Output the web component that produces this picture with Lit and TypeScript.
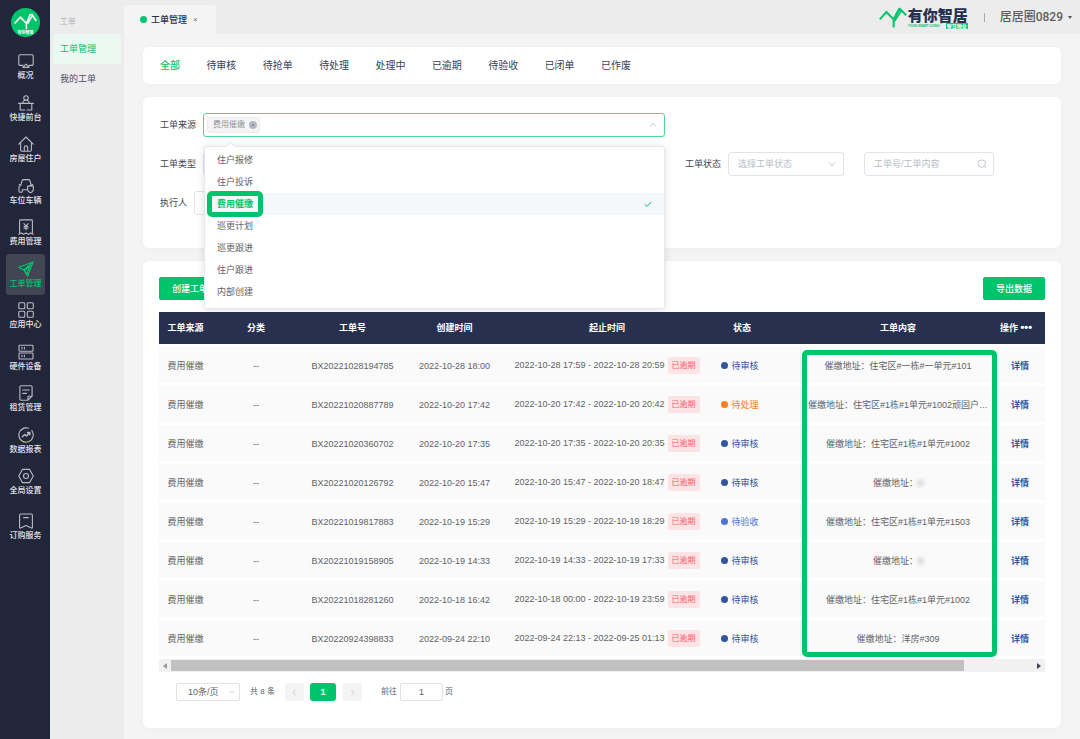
import { LitElement, html, svg, css } from "lit";
import { customElement, property, state } from "lit/decorators.js";
import { classMap } from "lit/directives/class-map.js";

const GLYPHS: Record<string, unknown> = {
  overview: svg`<path d="M11 12.400h3a1.200 1.200 0 0 0 1.200-1.200V3A1.200 1.200 0 0 0 14 1.800H2A1.200 1.200 0 0 0 .8 3v8.200A1.200 1.200 0 0 0 2 12.400h3M4.800 14.400 8 11.200l3.200 3.200z"/>`,
  desk: svg`<circle cx="8" cy="3" r="2.200"/><path d="M4.800 8.200c0-2 1.300-3 3.200-3s3.200 1 3.200 3M.6 8.400h14.800M2.200 8.400v6.600h4.400M13.800 8.400v6.600H9"/>`,
  house: svg`<path d="M.8 8.200 8 1l7.200 7.200M2.600 6.800v7.200c0 .8.4 1.200 1.200 1.200h8.400c.8 0 1.200-.4 1.200-1.200V6.800M6.300 15v-3.400a1.700 1.700 0 0 1 3.400 0V15"/>`,
  car: svg`<path d="M8.600 11.800H4.400v1.400c0 .7-.4 1-1 1H2c-.7 0-1-.4-1-1V8.800l1.800-1.600 1.300-4.600c.2-.7.6-1 1.300-1h5.200c.7 0 1.100.3 1.300 1L13.200 7M1.200 6.600l1.600.6M14.800 6.600l-1.200.6M9.600 8.400l2.900-.8 2.900.8v2.800c0 1.700-1.200 2.800-2.900 3.600-1.700-.8-2.900-1.900-2.900-3.600z"/>`,
  fee: svg`<path d="M1.600 13.800V1.800c0-.6.3-.9.9-.9h11c.6 0 .9.3.9.9v12M.8 15.200l2.400-1.300 2.400 1.300L8 13.900l2.400 1.300 2.400-1.300 2.400 1.300M5.900 4.600 8 7.200l2.100-2.600M8 7.200v3.600M6 7.600h4M6 9.200h4"/>`,
  order: svg`<path d="M15.200.9.800 6.200l5 2.700L9.600 15.200z"/><path d="M15.200.9 5.800 8.900M12.600 3.600 9.200 12.400M11.600 4.400l-4.800 5.200 2.200 3.600z"/>`,
  apps: svg`<rect x=".8" y=".8" width="6" height="6" rx="1"/><rect x="9.300" y=".8" width="6" height="6" rx="1"/><rect x=".8" y="9.300" width="6" height="6" rx="1"/><rect x="9.300" y="9.300" width="6" height="6" rx="1"/>`,
  device: svg`<rect x="1" y="1.200" width="14" height="6" rx=".8"/><rect x="1" y="9" width="14" height="6" rx=".8"/><path d="M4 3.400v1.600M6.400 3.400v1.600M4 11.200v1.600M6.400 11.200v1.600"/>`,
  lease: svg`<path d="M10 15.200H3c-.7 0-1.100-.4-1.100-1.100V1.900c0-.7.4-1.100 1.100-1.100h10c.7 0 1.100.4 1.100 1.100v9.300L10 15.200V12c0-.5.3-.8.8-.8h3.300M4.800 5h6.400M4.800 8.400h3.600"/>`,
  report: svg`<path d="M10.400 1.200a7.200 7.200 0 1 0 3.400 2.500M3.200 3.200A7.200 7.200 0 0 1 8 .8"/><path stroke-width="1.500" d="m4.400 9.800 2.300-2.300 1.800 1.500 3-3.200M9.400 5.400h2.400v2.300"/>`,
  gear: svg`<path d="M4.400 1.400h7.200L15.300 8l-3.700 6.600H4.400L.7 8z"/><circle cx="8" cy="8" r="2.500"/>`,
  cart: svg`<path d="M1.600 14.400V2.200c0-.8.4-1.200 1.200-1.200h10.400c.8 0 1.200.4 1.200 1.200v12.200c0 .7-.4.900-1 .5L8 12.400l-5.400 2.500c-.6.4-1 .2-1-.5zM5.600 4.600h4.800"/>`,
};

@customElement("line-icon")
class LineIcon extends LitElement {
  static styles = css`
    :host { display: block; width: 16px; height: 16px; }
    svg { display: block; width: 100%; height: 100%; fill: none; stroke: currentColor; stroke-width: 1.1; stroke-linejoin: round; stroke-linecap: round; }
  `;
  @property() name = "overview";
  render() {
    return html`<svg viewBox="0 0 16 16" aria-hidden="true">${GLYPHS[this.name]}</svg>`;
  }
}

const NAV: [string, string][] = [
  ["overview", "概况"], ["desk", "快捷前台"], ["house", "房屋住户"], ["car", "车位车辆"],
  ["fee", "费用管理"], ["order", "工单管理"], ["apps", "应用中心"], ["device", "硬件设备"],
  ["lease", "租赁管理"], ["report", "数据报表"], ["gear", "全局设置"],
];

@customElement("side-nav")
class SideNav extends LitElement {
  static styles = css`
    :host { display: flex; flex-direction: column; width: 50px; flex: none; background: #22263a; color: #e3e4e8; }
    .brand { display: block; width: 29px; height: 29px; margin: 8px auto 9px 11px; }
    .list { display: flex; flex-direction: column; height: 457px; }
    .item { flex: 1; display: flex; flex-direction: column; align-items: center; margin: 0 5px 0 6px; padding-top: 7px; box-sizing: border-box; border-radius: 3px; color: inherit; text-decoration: none; font-size: 8px; line-height: 12px; font-weight: 500; white-space: nowrap; }
    .item line-icon { color: #b9bbc3; margin-bottom: 1px; }
    .active { background: #414554; color: #00c46c; }
    .active line-icon { color: #00c46c; }
    .last { flex: none; margin-top: 3px; }
  `;
  render() {
    const item = (icon: string, label: string, cls: object) => html`
      <a class=${classMap({ item: true, ...cls })} href="#"><line-icon name=${icon}></line-icon>${label}</a>`;
    return html`
      <svg class="brand" viewBox="0 0 29 29" role="img" aria-label="有你智居">
        <circle cx="14.500" cy="14.500" r="14.500" fill="#00c46c"/>
        <path d="M3.600 15.600 9.400 9.200l6 6.200v5.600M15.400 15.200 19.400 6M16.600 15.600 21.800 6.600M20.600 6l4.600 7" fill="none" stroke="#fff" stroke-width="1.500"/>
        <text x="14.500" y="26" text-anchor="middle" font-size="4" font-weight="700" fill="#fff">有你智居</text>
      </svg>
      <nav class="list">${NAV.map(([i, l]) => item(i, l, { active: l === "工单管理" }))}</nav>
      ${item("cart", "订购服务", { last: true })}
    `;
  }
}

const FILTERS = ["全部", "待审核", "待抢单", "待处理", "处理中", "已逾期", "待验收", "已闭单", "已作废"];
const SOURCES = ["住户报修", "住户投诉", "费用催缴", "巡更计划", "巡更跟进", "住户跟进", "内部创建"];

interface Order { id: string; created: string; from: string; to: string; status: string; address: string; masked?: boolean }
const ORDERS: Order[] = [
  { id: "BX20221028194785", created: "2022-10-28 18:00", from: "2022-10-28 17:59", to: "2022-10-28 20:59", status: "待审核", address: "住宅区#一栋#一单元#101" },
  { id: "BX20221020887789", created: "2022-10-20 17:42", from: "2022-10-20 17:42", to: "2022-10-20 20:42", status: "待处理", address: "住宅区#1栋#1单元#1002顽固户…" },
  { id: "BX20221020360702", created: "2022-10-20 17:35", from: "2022-10-20 17:35", to: "2022-10-20 20:35", status: "待审核", address: "住宅区#1栋#1单元#1002" },
  { id: "BX20221020126792", created: "2022-10-20 15:47", from: "2022-10-20 15:47", to: "2022-10-20 18:47", status: "待审核", address: "", masked: true },
  { id: "BX20221019817883", created: "2022-10-19 15:29", from: "2022-10-19 15:29", to: "2022-10-19 18:29", status: "待验收", address: "住宅区#1栋#1单元#1503" },
  { id: "BX20221019158905", created: "2022-10-19 14:33", from: "2022-10-19 14:33", to: "2022-10-19 17:33", status: "待审核", address: "", masked: true },
  { id: "BX20221018281260", created: "2022-10-18 16:42", from: "2022-10-18 00:00", to: "2022-10-19 23:59", status: "待审核", address: "住宅区#1栋#1单元#1002" },
  { id: "BX20220924398833", created: "2022-09-24 22:10", from: "2022-09-24 22:13", to: "2022-09-25 01:13", status: "待审核", address: "洋房#309" },
];

const chevron = (d: string, cls = "") => html`<svg class="chev ${cls}" viewBox="0 0 8 8" aria-hidden="true"><path d=${d}/></svg>`;
const DOWN = "M.8 2.400 4 5.800l3.200-3.400";
const UP = "M.8 5.600 4 2.200l3.200 3.400";

@customElement("app-root")
class AppRoot extends LitElement {
  static styles = css`
    :host { display: flex; min-height: 100vh; background: #f4f4f4; color: #606266; font: 9px/14px "Liberation Sans", "Noto Sans CJK SC", sans-serif; }
    * { box-sizing: border-box; }
    button, input, select { font: inherit; color: inherit; margin: 0; }
    button { border: 0; padding: 0; background: none; cursor: pointer; }
    a { text-decoration: none; color: inherit; }
    ul { list-style: none; margin: 0; padding: 0; }

    .submenu { width: 74px; flex: none; background: #ececec; padding: 14px 3px 0; color: #4a5164; }
    .submenu .title { font-size: 8px; line-height: 15px; color: #b4b4b4; padding-left: 7px; height: 20px; }
    .submenu a { display: block; height: 30px; line-height: 30px; padding-left: 7px; border-radius: 3px; }
    .submenu .on { background: #ebf9f2; color: #00c46c; }

    .main { flex: 1; min-width: 0; display: flex; flex-direction: column; }
    .topbar { height: 34px; background: #ececec; display: flex; justify-content: space-between; align-items: flex-end; }
    .tab { height: 29px; width: 92px; background: #f4f4f4; display: flex; align-items: center; padding-left: 16px; color: #2b3350; font-weight: 500; border-radius: 2px 2px 0 0; }
    .tab .dot { width: 7px; height: 7px; margin-right: 4px; background: #00c46c; border-radius: 50%; }
    .tab .close { margin-left: 6px; color: #666b78; font-size: 8px; line-height: 12px; }
    .account { display: flex; align-items: center; height: 34px; padding-right: 8px; }
    .logo { display: flex; }
    .logo svg { display: block; width: 28px; height: 21px; margin-top: 1px; }
    .wordmark { display: flex; flex-direction: column; margin-left: 1px; }
    .wordmark .name { font-size: 15px; line-height: 16px; font-weight: 900; font-style: oblique 8deg; color: #27314f; height: 17px; padding-top: 2px; }
    .wordmark .sub { display: flex; align-items: center; justify-content: space-between; height: 6px; font-size: 3px; line-height: 6px; color: #00c46c; font-weight: 700; }
    .wordmark .badge { background: #00c46c; color: #fff; font-size: 5px; padding: 0 1px; }
    .divider { width: 1px; height: 9px; background: #a8a8ac; margin: 0 15px 0 16px; }
    .user { display: flex; align-items: center; font-family: Roboto, "Noto Sans CJK SC", sans-serif; font-size: 12px; line-height: 16px; font-weight: 500; color: #5c5d63; }
    .caret { border: 2px solid transparent; border-top: 3px solid #55565c; border-bottom: 0; margin-left: 5px; }

    .content { display: flex; flex-direction: column; gap: 13px; padding: 13px 19px 11px; }
    .card { background: #fff; border-radius: 6px; box-shadow: 0 1px 5px rgba(0, 0, 0, 0.03); padding: 16px; }
    .filters { height: 37px; padding: 0 17px; display: flex; align-items: center; }
    .filters ul { width: 471px; display: flex; justify-content: space-between; }
    .filters button { font-size: 10px; line-height: 16px; color: #3b4256; display: block; }
    .filters .on { color: #00c46c; font-weight: 500; }

    .form { display: flex; flex-direction: column; gap: 15px; padding-left: 17px; padding-bottom: 33px; }
    .row { display: flex; gap: 20px; }
    .field { display: flex; align-items: center; gap: 7px; height: 24px; }
    .wide { width: 505px; }
    .field label { color: #44474f; white-space: nowrap; }
    .control { position: relative; display: flex; align-items: center; height: 24px; border: 1px solid #e1e4eb; border-radius: 3px; background: #fff; }
    .control select, .control input { appearance: none; width: 100%; height: 100%; border: 0; outline: 0; background: none; padding: 0 9px; color: #b9bdc6; border-radius: 3px; }
    .control input::placeholder { color: #b9bdc6; opacity: 1; }
    .w116 { width: 116px; }
    .w130 { width: 130px; }
    .chev { position: absolute; right: 7px; width: 8px; height: 8px; fill: none; stroke: #c0c4cc; stroke-width: 1; pointer-events: none; }
    .search { position: absolute; right: 6px; width: 10px; height: 10px; fill: none; stroke: #c0c4cc; }
    .multi { flex: 1; border-color: #4fd597; padding-left: 3px; }
    .multi input { flex: 1; width: 0; }
    .tag { display: flex; align-items: center; gap: 4px; height: 16px; padding: 0 2px 0 5px; background: #f4f4f5; border: 1px solid #ebebee; border-radius: 3px; color: #909399; font-size: 8px; white-space: nowrap; flex: none; }
    .tag svg { display: block; width: 8px; height: 8px; }

    .drop { position: absolute; z-index: 5; top: 32px; left: 0; right: -1px; height: 163px; background: #fff; border: 1px solid #e4e7ed; border-radius: 3px; box-shadow: 0 1px 8px rgba(0, 0, 0, 0.12); padding-top: 2px; }
    .drop::before { content: ""; position: absolute; left: 22px; top: -4px; width: 6px; height: 6px; background: #fff; border: 1px solid #e4e7ed; border-right: 0; border-bottom: 0; transform: rotate(45deg); }
    .option { position: relative; display: flex; align-items: center; justify-content: space-between; width: 100%; height: 22px; padding: 0 12px; color: #606266; }
    .option.on { background: #f5f7fa; color: #00c46c; font-weight: 700; }
    .option svg { width: 8px; height: 8px; fill: none; stroke: #00c46c; stroke-width: 1; }
    .mark { position: absolute; border: 5px solid #00c46c; border-radius: 5px; pointer-events: none; }
    .mark-option { left: 2px; top: -2px; width: 56px; height: 26px; }
    .mark-column { right: 48px; top: 41px; width: 195px; height: 307px; }

    .actions { display: flex; justify-content: space-between; margin-bottom: 9px; }
    .primary { height: 23px; width: 62px; background: #00c46c; color: #fff; border-radius: 2px; font-weight: 500; }
    .grid { position: relative; }
    table { width: 100%; table-layout: fixed; border-collapse: separate; border-spacing: 0 3px; text-align: center; }
    th { height: 32px; padding: 0; background: #27314f; color: #fff; font-weight: 700; }
    td { height: 36px; padding: 1px 0 0; background: #fafafa; white-space: nowrap; }
    .c1 { width: 53px; } .c2 { width: 88px; } .c3 { width: 105px; } .c4 { width: 99px; }
    .c5 { width: 206px; } .c6 { width: 64px; } .c8 { width: 194px; } .c9 { width: 50px; }
    .edge { border-right: 1px solid rgba(0, 0, 0, 0.04); }
    .ops { padding-right: 8px; }
    .more { font-size: 11px; line-height: 9px; }
    .span { display: flex; align-items: center; justify-content: center; gap: 3px; }
    .span time { padding-bottom: 2px; }
    .late { height: 17px; line-height: 17px; padding: 0 4px; background: #fce3e5; color: #f5606b; border-radius: 3px; font-size: 8px; }
    .status { display: flex; align-items: center; justify-content: center; gap: 3px; padding-right: 4px; color: #32559f; }
    .status::before { content: ""; width: 7px; height: 7px; border-radius: 50%; background: currentColor; }
    .pending { color: #fb7d1c; }
    .check { color: #4b76d8; }
    .masked { filter: blur(2px); color: #909399; }
    .detail { color: #32559f; font-weight: 700; }
    .scroll { display: grid; grid-template-columns: 12px 1fr 12px; align-items: center; height: 13px; background: #f1f1f1; }
    .scroll button { display: flex; align-items: center; justify-content: center; height: 13px; }
    .scroll svg { width: 4px; height: 6px; fill: #999; }
    .scroll .next svg { fill: #404354; }
    .thumb { width: 92%; height: 11px; background: #c1c1c1; }

    .pager { display: flex; align-items: center; height: 18px; margin: 11px 17px; font-size: 8px; color: #606266; white-space: nowrap; }
    .pager .control { height: 18px; border-radius: 2px; }
    .pager .size { width: 64px; margin-right: 10px; }
    .pager select { color: #606266; font-size: 9px; padding: 0 11px; }
    .pager .size .chev { right: 4px; width: 6px; height: 6px; }
    .pager .step { display: flex; align-items: center; justify-content: center; width: 19px; height: 18px; background: #f4f4f5; border-radius: 2px; }
    .step .chev { position: static; width: 7px; height: 7px; }
    .pager .current { width: 26px; height: 18px; margin: 0 7px 0 6px; border-radius: 3px; background: #00c46c; color: #fff; font-size: 9px; font-weight: 700; }
    .total { margin-right: 9px; width: 26px; font-size: 8px; }
    .pager .jump { width: 43px; margin: 0 2px 0 3px; }
    .pager .jump input { text-align: center; color: #606266; font-size: 9px; padding: 0; }
    .goto { margin-left: 19px; }
  `;

  @state() private filter = "全部";
  @state() private source = "费用催缴";

  private field(id: string, label: string, control: unknown, wide = false) {
    return html`<div class=${classMap({ field: true, wide })}><label for=${id}>${label}</label>${control}</div>`;
  }

  private picker(id: string, placeholder: string) {
    return html`<div class="control w116"><select id=${id}><option>${placeholder}</option></select>${chevron(DOWN)}</div>`;
  }

  private sourcePicker() {
    return html`
      <div class="control multi">
        <span class="tag">${this.source}
          <svg viewBox="0 0 8 8" aria-hidden="true"><circle cx="4" cy="4" r="4" fill="#b4bac4"/><path d="M2.600 2.600l2.800 2.800M5.400 2.600 2.600 5.400" stroke="#7d8596" stroke-width=".8"/></svg>
        </span>
        <input id="source" role="combobox" aria-expanded="true" aria-controls="sources" readonly />
        ${chevron(UP)}
        <div class="drop" id="sources" role="listbox">
          ${SOURCES.map((s) => html`
            <button class=${classMap({ option: true, on: s === this.source })} role="option" aria-selected=${s === this.source} @click=${() => (this.source = s)}>
              ${s}
              ${s === this.source ? html`<svg viewBox="0 0 8 8"><path d="M.6 4.200 3 6.400l4.400-4.600"/></svg><i class="mark mark-option"></i>` : ""}
            </button>`)}
        </div>
      </div>`;
  }

  private row(o: Order) {
    return html`
      <tr>
        <td>费用催缴</td><td>--</td><td>${o.id}</td><td>${o.created}</td>
        <td><div class="span"><time>${o.from} - ${o.to}</time><span class="late">已逾期</span></div></td>
        <td><span class=${classMap({ status: true, pending: o.status === "待处理", check: o.status === "待验收" })}>${o.status}</span></td>
        <td class="edge"></td>
        <td>催缴地址：${o.masked ? html`<span class="masked">9</span>` : o.address}</td>
        <td><a class="detail" href="#">详情</a></td>
      </tr>`;
  }

  render() {
    return html`
      <side-nav></side-nav>
      <nav class="submenu">
        <div class="title">工单</div>
        <a class="on" href="#">工单管理</a>
        <a href="#">我的工单</a>
      </nav>
      <div class="main">
        <header class="topbar">
          <div class="tab"><i class="dot"></i>工单管理<button class="close" aria-label="关闭">×</button></div>
          <div class="account">
            <div class="logo">
              <svg viewBox="0 0 28 21" aria-hidden="true">
                <path d="M.8 12.400 7.400 5l7.200 7.400v8.200M14.400 12.600 20.200 2M15.400 14 22.600 3.200M20.400 1.400l6.800 6.800" fill="none" stroke="#00c46c" stroke-width="2"/>
                <path d="M16 7.600 20.400.6l1.600 1-4.600 7z" fill="#00c46c"/>
              </svg>
              <div class="wordmark">
                <span class="name">有你智居</span>
                <span class="sub"><span>YOUNI SMART LIVING</span><span class="badge">智慧物业</span></span>
              </div>
            </div>
            <i class="divider"></i>
            <button class="user">居居圈0829<i class="caret"></i></button>
          </div>
        </header>
        <main class="content">
          <section class="card filters">
            <ul>${FILTERS.map((f) => html`<li><button class=${classMap({ on: f === this.filter })} @click=${() => (this.filter = f)}>${f}</button></li>`)}</ul>
          </section>
          <section class="card form">
            <div class="row">${this.field("source", "工单来源", this.sourcePicker(), true)}</div>
            <div class="row">
              ${this.field("type", "工单类型", this.picker("type", ""), true)}
              ${this.field("status", "工单状态", this.picker("status", "选择工单状态"))}
              <div class="control w130">
                <input type="text" aria-label="工单号/工单内容" placeholder="工单号/工单内容" />
                <svg class="search" viewBox="0 0 10 10" aria-hidden="true"><circle cx="4.800" cy="4.600" r="3.700"/><path d="m7.400 7.400 1.600 1.600"/></svg>
              </div>
            </div>
            <div class="row">${this.field("owner", "执行人", this.picker("owner", ""))}</div>
          </section>
          <section class="card">
            <div class="actions"><button class="primary">创建工单</button><button class="primary">导出数据</button></div>
            <div class="grid">
              <table>
                <colgroup><col class="c1" /><col class="c2" /><col class="c3" /><col class="c4" /><col class="c5" /><col class="c6" /><col /><col class="c8" /><col class="c9" /></colgroup>
                <thead><tr><th>工单来源</th><th>分类</th><th>工单号</th><th>创建时间</th><th>起止时间</th><th>状态</th><th class="edge"></th><th>工单内容</th><th class="ops">操作 <span class="more">•••</span></th></tr></thead>
                <tbody>${ORDERS.map((o) => this.row(o))}</tbody>
              </table>
              <i class="mark mark-column"></i>
            </div>
            <div class="scroll">
              <button aria-label="向左"><svg viewBox="0 0 4 6"><path d="M4 0v6L0 3z"/></svg></button>
              <div class="thumb"></div>
              <button class="next" aria-label="向右"><svg viewBox="0 0 4 6"><path d="M0 0v6l4-3z"/></svg></button>
            </div>
            <div class="pager">
              <div class="control size"><select aria-label="每页条数"><option>10条/页</option></select>${chevron(DOWN)}</div>
              <span class="total">共 8 条</span>
              <button class="step" aria-label="上一页">${chevron("M5.400.8 2.200 4l3.200 3.200")}</button>
              <button class="current">1</button>
              <button class="step" aria-label="下一页">${chevron("M2.600.8 5.800 4 2.600 7.200")}</button>
              <label class="goto" for="page">前往</label>
              <div class="control jump"><input id="page" type="text" value="1" /></div>
              <span>页</span>
            </div>
          </section>
        </main>
      </div>
    `;
  }
}
